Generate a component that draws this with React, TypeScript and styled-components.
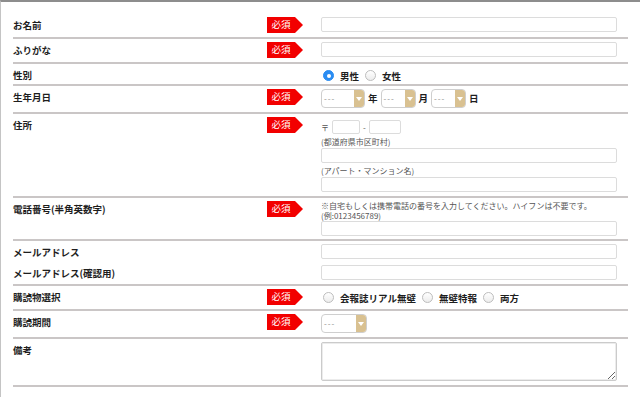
import styled, { createGlobalStyle } from "styled-components";

const GlobalStyle = createGlobalStyle`
    html, body {
        margin: 0;
        padding: 0;
        background: #fff;
    }
    body {
        font-family: "Noto Sans CJK JP", "Liberation Sans", sans-serif;
        color: #1e1e1e;
    }
`;

const Page = styled.div`
    box-sizing: border-box;
    height: 397px;
    border-top: 2px solid #8d8d8d;
    border-left: 1px solid #c4c4c4;
    padding: 12px 0 0 12px;
`;

const Form = styled.div`
    width: 615px;
`;

const Row = styled.div<{ $pad?: string; $line?: boolean }>`
    display: grid;
    grid-template-columns: 254px 54px 296px;
    align-items: start;
    padding: ${(p) => p.$pad ?? "3px 0 4px"};
    border-bottom: ${(p) => (p.$line === false ? "none" : "2px solid #cac6c6")};
`;

const Label = styled.div`
    font-size: 9.5px;
    line-height: 15px;
    padding-top: 1px;
    font-weight: 700;
    white-space: nowrap;
`;

const BadgeCell = styled.div`
    height: 16px;
`;

const Badge = styled.span`
    position: relative;
    display: flex;
    align-items: center;
    justify-content: center;
    width: 28px;
    height: 16px;
    background: #f20000;
    color: #fff;
    font-size: 9.5px;
    line-height: 1;

    &::after {
        content: "";
        position: absolute;
        left: 100%;
        top: 0;
        border-left: 8px solid #f20000;
        border-top: 8px solid transparent;
        border-bottom: 8px solid transparent;
    }
`;

const Field = styled.div`
    display: flex;
    flex-direction: column;
`;

const TextInput = styled.input<{ $w?: number; $h?: number }>`
    box-sizing: border-box;
    display: block;
    width: ${(p) => p.$w ?? 296}px;
    height: ${(p) => p.$h ?? 15}px;
    margin: 0;
    padding: 0 4px;
    border: 1px solid #dcdcdc;
    border-radius: 2px;
    background: #fff;
    outline: none;
    font-size: 9px;
`;

const InlineRow = styled.div<{ $gap: number; $top?: number }>`
    display: flex;
    align-items: center;
    gap: ${(p) => p.$gap}px;
    margin-top: ${(p) => p.$top ?? 0}px;
`;

const Unit = styled.span`
    font-size: 9.5px;
    font-weight: 700;
    line-height: 19px;
`;

const SelectBox = styled.div<{ $w: number }>`
    box-sizing: border-box;
    display: flex;
    width: ${(p) => p.$w}px;
    height: 19px;
    border: 1px solid #cfcfcf;
    border-radius: 4px;
    overflow: hidden;
    background: #fff;
`;

const SelectValue = styled.span`
    flex: 1;
    padding-left: 2px;
    font-size: 8px;
    line-height: 17px;
    letter-spacing: 1px;
    color: #8a8a8a;
`;

const SelectArrow = styled.span`
    display: flex;
    align-items: center;
    justify-content: center;
    width: 10px;
    background: #d9c191;

    &::before {
        content: "";
        border-left: 3px solid transparent;
        border-right: 3px solid transparent;
        border-top: 4px solid #fff;
    }
`;

const RadioGroup = styled.div`
    display: flex;
    align-items: center;
    height: 15px;
    padding-top: 1px;
`;

const RadioOption = styled.label`
    display: inline-flex;
    align-items: center;
    margin-right: 4px;
`;

const RadioCircle = styled.span<{ $checked?: boolean }>`
    box-sizing: border-box;
    display: inline-flex;
    align-items: center;
    justify-content: center;
    width: 11px;
    height: 11px;
    margin: 0 6px 0 2px;
    border-radius: 50%;
    border: 1px solid ${(p) => (p.$checked ? "#2a8cf2" : "#bdbdbd")};
    background: ${(p) => (p.$checked ? "#2a8cf2" : "linear-gradient(#ffffff, #ececec)")};

    &::after {
        content: "";
        display: ${(p) => (p.$checked ? "block" : "none")};
        width: 4px;
        height: 4px;
        border-radius: 50%;
        background: #fff;
    }
`;

const RadioText = styled.span`
    font-size: 9.5px;
    font-weight: 700;
    white-space: nowrap;
`;

const Small = styled.span`
    font-size: 8px;
    color: #555;
`;

const Caption = styled.div`
    font-size: 8px;
    line-height: 12px;
    margin-top: 2px;
    color: #555;
`;

const NoteLine = styled.div`
    font-size: 8px;
    line-height: 10px;
    color: #555;
    white-space: nowrap;
`;

const Memo = styled.textarea`
    box-sizing: border-box;
    display: block;
    width: 296px;
    height: 39px;
    margin: 0;
    border: 1px solid #cbcbcb;
    border-radius: 2px;
    box-shadow: inset 0 0 0 1px #ececec;
    outline: none;
`;

function Required() {
    return (
        <BadgeCell>
            <Badge>必須</Badge>
        </BadgeCell>
    );
}

function Select(props: { w: number }) {
    return (
        <SelectBox $w={props.w}>
            <SelectValue>---</SelectValue>
            <SelectArrow />
        </SelectBox>
    );
}

function Radios(props: { options: string[]; checked?: number }) {
    return (
        <RadioGroup>
            {props.options.map((o, i) => (
                <RadioOption key={o}>
                    <RadioCircle $checked={props.checked === i} />
                    <RadioText>{o}</RadioText>
                </RadioOption>
            ))}
        </RadioGroup>
    );
}

export default function App() {
    return (
        <>
            <GlobalStyle />
            <Page>
                <Form>
                    <Row>
                        <Label>お名前</Label>
                        <Required />
                        <TextInput />
                    </Row>
                    <Row>
                        <Label>ふりがな</Label>
                        <Required />
                        <TextInput />
                    </Row>
                    <Row $pad="3px 0 1px">
                        <Label>性別</Label>
                        <BadgeCell />
                        <Radios options={["男性", "女性"]} checked={0} />
                    </Row>
                    <Row>
                        <Label>生年月日</Label>
                        <Required />
                        <InlineRow $gap={3}>
                            <Select w={44} />
                            <Unit>年</Unit>
                            <Select w={35} />
                            <Unit>月</Unit>
                            <Select w={35} />
                            <Unit>日</Unit>
                        </InlineRow>
                    </Row>
                    <Row>
                        <Label>住所</Label>
                        <Required />
                        <Field>
                            <InlineRow $gap={3} $top={3}>
                                <Small>〒</Small>
                                <TextInput $w={28} $h={14} />
                                <Small>-</Small>
                                <TextInput $w={32} $h={14} />
                            </InlineRow>
                            <Caption>(都道府県市区町村)</Caption>
                            <TextInput />
                            <Caption>(アパート・マンション名)</Caption>
                            <TextInput />
                        </Field>
                    </Row>
                    <Row $pad="3px 0 3px">
                        <Label>電話番号(半角英数字)</Label>
                        <Required />
                        <Field>
                            <NoteLine>※自宅もしくは携帯電話の番号を入力してください。ハイフンは不要です。</NoteLine>
                            <NoteLine>(例:0123456789)</NoteLine>
                            <TextInput />
                        </Field>
                    </Row>
                    <Row $pad="3px 0 2px" $line={false}>
                        <Label>メールアドレス</Label>
                        <BadgeCell />
                        <TextInput />
                    </Row>
                    <Row $pad="3px 0 3px">
                        <Label>メールアドレス(確認用)</Label>
                        <BadgeCell />
                        <TextInput />
                    </Row>
                    <Row>
                        <Label>購読物選択</Label>
                        <Required />
                        <Radios options={["会報誌リアル無壁", "無壁特報", "両方"]} />
                    </Row>
                    <Row>
                        <Label>購読期間</Label>
                        <Required />
                        <Select w={46} />
                    </Row>
                    <Row>
                        <Label>備考</Label>
                        <BadgeCell />
                        <Memo />
                    </Row>
                </Form>
            </Page>
        </>
    );
}
